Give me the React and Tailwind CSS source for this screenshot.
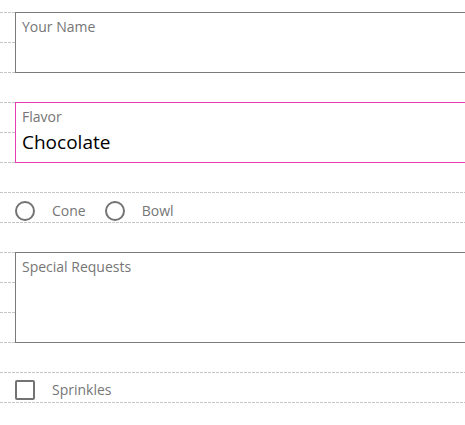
import React from "react";

const font = { fontFamily: '"Open Sans", "Noto Sans", sans-serif' };

const lineRows = [
  "row-start-1",
  "row-start-2",
  "row-start-3",
  "row-start-4",
  "row-start-5",
  "row-start-6",
  "row-start-7",
  "row-start-8",
  "row-start-9",
  "row-start-10",
  "row-start-11",
  "row-start-12",
  "row-start-13",
  "row-start-14",
];

function GridLine({ row }) {
  return (
    <div
      className={`${row} col-start-1 self-start h-px w-full bg-[repeating-linear-gradient(to_right,#c6c6c6_0_3px,transparent_3px_4px)]`}
    />
  );
}

function Radio({ label, className }) {
  return (
    <div className={`flex items-center ${className}`}>
      <span className="w-[20px] h-[20px] rounded-full border-2 border-[#737373] box-border" />
      <span className="ml-[17px] text-[14px] text-[#767676]">{label}</span>
    </div>
  );
}

export default function App() {
  return (
    <div
      className="w-[465px] h-[425px] bg-white overflow-hidden pt-[12px]"
      style={font}
    >
      <div className="grid grid-cols-1 grid-rows-[repeat(14,30px)] w-[480px]">
        {lineRows.map((r) => (
          <GridLine key={r} row={r} />
        ))}

        <div className="row-start-1 col-start-1 self-start ml-[15px] h-[61px] border border-[#7a7a7a] bg-white pl-[6px] pt-[1px]">
          <span className="text-[14px] leading-[20px] text-[#767676]">Your Name</span>
        </div>

        <div className="row-start-4 col-start-1 self-start ml-[15px] h-[61px] border border-[#e53cb0] bg-white pl-[6px] pt-[4px] flex flex-col">
          <span className="text-[14px] leading-[20px] text-[#767676]">Flavor</span>
          <span className="text-[19px] leading-[30px] text-black">Chocolate</span>
        </div>

        <div className="row-start-7 col-start-1 self-start flex items-center pt-[8px]">
          <Radio label="Cone" className="ml-[15px]" />
          <Radio label="Bowl" className="ml-[19px]" />
        </div>

        <div className="row-start-9 col-start-1 self-start ml-[15px] h-[91px] border border-[#7a7a7a] bg-white pl-[6px] pt-[1px]">
          <span className="text-[14px] leading-[20px] text-[#767676]">Special Requests</span>
        </div>

        <div className="row-start-13 col-start-1 self-start flex items-center pt-[7px] ml-[15px]">
          <span className="w-[20px] h-[20px] rounded-[2px] border-2 border-[#737373] box-border" />
          <span className="ml-[17px] text-[14px] text-[#767676]">Sprinkles</span>
        </div>
      </div>
    </div>
  );
}
